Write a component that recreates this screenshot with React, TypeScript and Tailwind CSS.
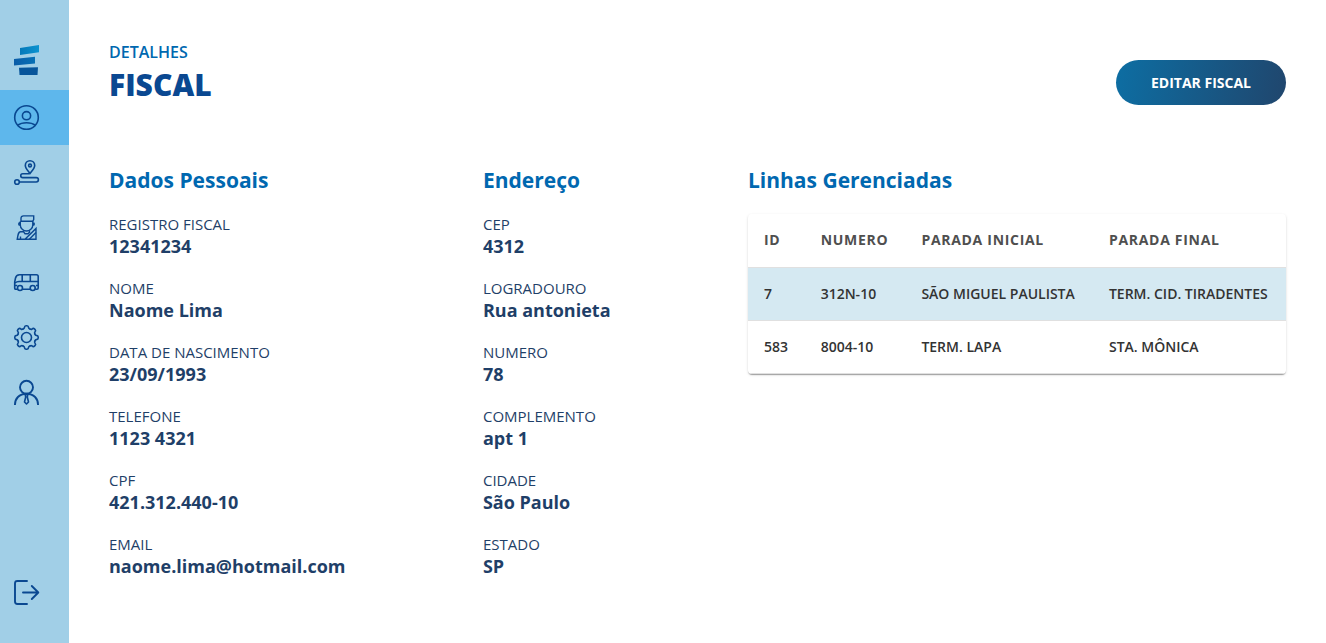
import type { ReactNode } from "react";

type Field = { label: string; value: string };

const personal: Field[] = [
  { label: "REGISTRO FISCAL", value: "12341234" },
  { label: "NOME", value: "Naome Lima" },
  { label: "DATA DE NASCIMENTO", value: "23/09/1993" },
  { label: "TELEFONE", value: "1123 4321" },
  { label: "CPF", value: "421.312.440-10" },
  { label: "EMAIL", value: "naome.lima@hotmail.com" },
];

const address: Field[] = [
  { label: "CEP", value: "4312" },
  { label: "LOGRADOURO", value: "Rua antonieta" },
  { label: "NUMERO", value: "78" },
  { label: "COMPLEMENTO", value: "apt 1" },
  { label: "CIDADE", value: "São Paulo" },
  { label: "ESTADO", value: "SP" },
];

const lines = [
  { id: 7, number: "312N-10", start: "SÃO MIGUEL PAULISTA", end: "TERM. CID. TIRADENTES" },
  { id: 583, number: "8004-10", start: "TERM. LAPA", end: "STA. MÔNICA" },
];

const toothAngles = [0, 45, 90, 135, 180, 225, 270, 315];

function Icon({ children }: { children: ReactNode }) {
  return (
    <svg
      viewBox="0 0 25 25"
      className="size-[25px] overflow-visible"
      fill="none"
      stroke="#0a4891"
      strokeWidth="1.6"
      aria-hidden="true"
    >
      {children}
    </svg>
  );
}

function Logo() {
  return (
    <svg viewBox="0 0 25 31" className="h-[31px] w-[25px]" aria-hidden="true">
      <defs>
        <linearGradient id="logo-top">
          <stop offset="0" stopColor="#0478b9" />
          <stop offset="1" stopColor="#0b93d0" />
        </linearGradient>
        <linearGradient id="logo-mid">
          <stop offset="0" stopColor="#0a5ca8" />
          <stop offset="1" stopColor="#0770b5" />
        </linearGradient>
      </defs>
      <path d="M6 4 25 1v7.200L6 11z" fill="url(#logo-top)" />
      <path d="M0 15 21 12.800v6.800L0 21.400z" fill="url(#logo-mid)" />
      <path d="M5 23.700 24 23.200 23.500 31H5.500z" fill="#07559b" />
    </svg>
  );
}

const navItems: { label: string; active?: boolean; icon: ReactNode }[] = [
  {
    label: "Perfil",
    active: true,
    icon: (
      <>
        <circle cx="12.5" cy="12.5" r="11.8" />
        <circle cx="12.5" cy="10.7" r="4.1" />
        <path d="M3.800 20.200C6 18.500 9 17.800 12.500 17.800s6.500.700 8.700 2.400" />
      </>
    ),
  },
  {
    label: "Linhas",
    icon: (
      <>
        <path d="M16 13.500c-2.500-3.200-4.700-5.300-4.700-8a4.700 4.700 0 0 1 9.400 0c0 2.700-2.200 4.800-4.700 8z" />
        <circle cx="16" cy="5.5" r="1.4" />
        <circle cx="3" cy="22" r="2.3" />
        <path d="M15.500 13.700H8.700a1.900 1.900 0 0 0 0 3.900h13.500a2.200 2.200 0 0 1 0 4.400H5.500" />
      </>
    ),
  },
  {
    label: "Fiscais",
    icon: (
      <g strokeWidth="1.4">
        <path d="M7 6.300V3.500C7 1.800 8 .900 9.500 .900H19.700V4.500L18.700 6.300z" />
        <path d="M6.300 6.300v3.700c0 3.500 3 6 6.200 6s6.300-2.500 6.300-6V6.300M6.200 7.500C4.200 7.800 4.200 10 6.200 10.300M18.800 7.500c2 .300 2 2.500 0 2.800" />
        <path d="M9.500 15.500v1.200H6.500C4.500 16.700 4 19 3.200 24.300H22V13.500L11 24.300M15.500 15.500v1.200M9.500 16.700l1.500 2h3l2-2M6.500 21.500v3" />
        <path d="M15.300 24.300 22 17.600" />
      </g>
    ),
  },
  {
    label: "Ônibus",
    icon: (
      <>
        <path d="M3.300 19.200H1.800C1 19.200.700 18.800.700 18v-6l.800-4C2 5.800 3.500 4.800 5.500 4.800h17c1.100 0 1.700.700 1.700 1.800V18c0 .800-.400 1.200-1.200 1.200h-1.700M8.500 19.200h7.700" />
        <path d="M.900 13C2.500 11.700 3.500 11.500 5 11.500h19M8.200 5v6.500M16.300 5v6.500M.900 15.500h2.300M22 15.500h2.100" />
        <circle cx="6" cy="18" r="2.5" />
        <circle cx="18.7" cy="18" r="2.5" />
      </>
    ),
  },
  {
    label: "Configurações",
    icon: (
      <>
        {toothAngles.map((angle) => (
          <path
            key={angle}
            strokeLinecap="round"
            transform={`rotate(${angle} 12.5 12.5)`}
            d="M9.020 4.100Q10.300 3.700 10.400 2.700 10.500.800 12 .800H13Q14.500.800 14.600 2.700 14.700 3.700 15.980 4.100"
          />
        ))}
        <circle cx="12.5" cy="12.5" r="5" />
      </>
    ),
  },
  {
    label: "Administradores",
    icon: (
      <>
        <circle cx="12.5" cy="7.3" r="6.5" strokeWidth="1.9" />
        <path strokeWidth="1.9" d="M.900 25c0-6.300 4.200-11.200 11.600-11.200S24.100 18.700 24.100 25" />
        <path strokeLinejoin="round" d="M11.200 14.500h2.600l-.500 2.500 1.200 5-2 2-2-2 1.200-5z" />
      </>
    ),
  },
];

function Details({ title, fields }: { title: string; fields: Field[] }) {
  return (
    <section>
      <h2 className="text-[21px] leading-[30px] font-bold text-[#0068b0]">{title}</h2>
      <dl className="mt-[18px] flex flex-col gap-5">
        {fields.map((field) => (
          <div key={field.label}>
            <dt className="text-[15px] leading-[22px] text-[#1f3f68]">{field.label}</dt>
            <dd className="text-lg leading-[22px] font-bold text-[#1f3f68]">{field.value}</dd>
          </div>
        ))}
      </dl>
    </section>
  );
}

export default function App() {
  return (
    <div className="flex min-h-screen bg-white font-['Open_Sans',sans-serif]">
      <aside className="flex w-[69px] shrink-0 flex-col bg-[#a1cfe7]">
        <a href="#inicio" aria-label="Início" className="flex h-[90px] items-end pb-[15px] pl-[14px]">
          <Logo />
        </a>
        <nav className="flex flex-col">
          {navItems.map((item) => (
            <a
              key={item.label}
              href="#"
              aria-label={item.label}
              className={
                item.active
                  ? "flex h-[55px] items-center bg-[#5eb7ec] pl-[14px]"
                  : "flex h-[55px] items-center pl-[14px]"
              }
            >
              <Icon>{item.icon}</Icon>
            </a>
          ))}
        </nav>
        <button type="button" aria-label="Sair" className="mt-auto mb-[23px] flex h-[55px] items-center pl-[14px]">
          <Icon>
            <path
              strokeWidth="1.9"
              strokeLinecap="round"
              strokeLinejoin="round"
              d="M13 1H3.500C1.800 1 1 1.800 1 3.500v18C1 23.200 1.800 24 3.500 24H13M9 12.500h15M17.800 6l6.500 6.500-6.500 6.500"
            />
          </Icon>
        </button>
      </aside>
      <main className="flex-1 px-10 pt-10 pb-16">
        <header className="flex items-center justify-between">
          <div>
            <p className="text-base leading-6 font-semibold text-[#0068b0]">DETALHES</p>
            <h1 className="text-[30px] leading-[42px] font-extrabold text-[#0a4891]">FISCAL</h1>
          </div>
          <button
            type="button"
            className="mt-[18px] h-[45px] w-[170px] rounded-full bg-linear-[100deg,#0d6ea3,#20466d] pt-px text-sm font-bold text-white"
          >
            EDITAR FISCAL
          </button>
        </header>
        <div className="mt-[59px] flex items-start justify-between">
          <Details title="Dados Pessoais" fields={personal} />
          <Details title="Endereço" fields={address} />
          <section>
            <h2 className="text-[21px] leading-[30px] font-bold text-[#0068b0]">Linhas Gerenciadas</h2>
            <div className="mt-[19px] overflow-hidden rounded shadow-[0_2px_1px_-1px_rgba(0,0,0,0.2),0_1px_1px_0_rgba(0,0,0,0.14),0_1px_3px_0_rgba(0,0,0,0.12)]">
              <table className="w-full min-w-[538px] border-collapse text-left text-sm text-[#333333]">
                <thead>
                  <tr className="h-[53px] border-b border-[#e0e0e0] tracking-wider text-[#4f4f4f]">
                    <th scope="col" className="px-4 font-bold">ID</th>
                    <th scope="col" className="px-4 font-bold">NUMERO</th>
                    <th scope="col" className="px-4 font-bold">PARADA INICIAL</th>
                    <th scope="col" className="px-4 font-bold">PARADA FINAL</th>
                  </tr>
                </thead>
                <tbody>
                  {lines.map((line) => (
                    <tr
                      key={line.id}
                      className="h-[53px] border-b border-[#e0e0e0] font-semibold odd:bg-[#d5e9f2]"
                    >
                      <td className="px-4">{line.id}</td>
                      <td className="px-4">{line.number}</td>
                      <td className="px-4">{line.start}</td>
                      <td className="px-4">{line.end}</td>
                    </tr>
                  ))}
                </tbody>
              </table>
            </div>
          </section>
        </div>
      </main>
    </div>
  );
}
